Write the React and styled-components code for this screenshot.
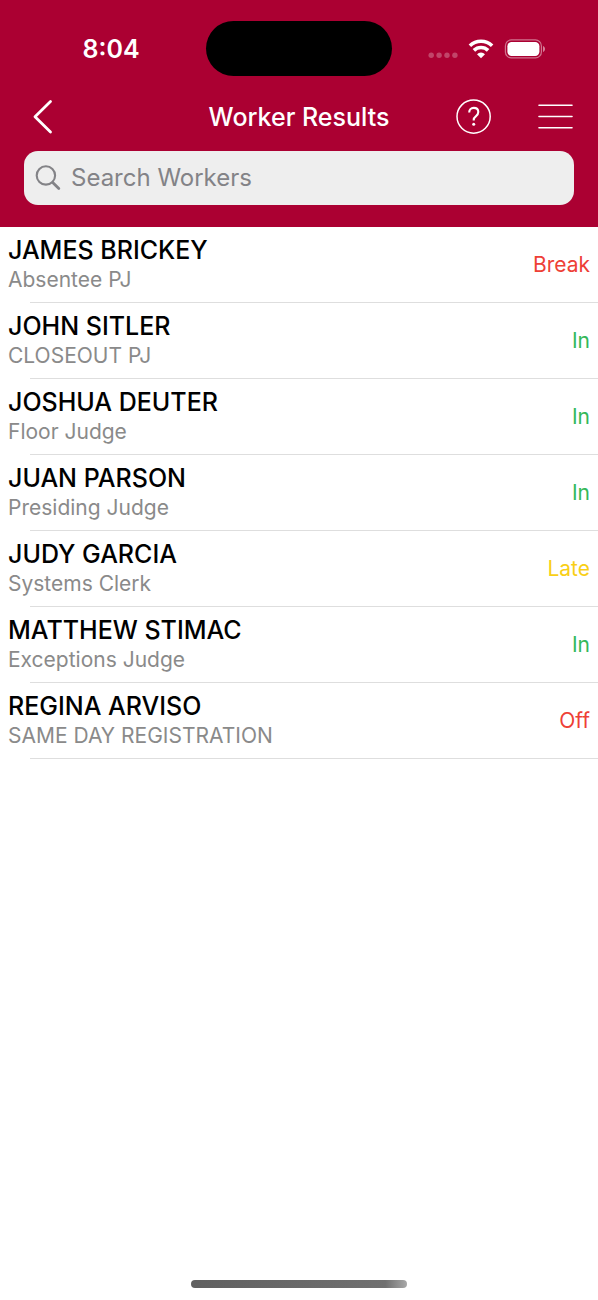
import React from "react";
import styled, { createGlobalStyle } from "styled-components";

const GlobalStyle = createGlobalStyle`
  *, *::before, *::after { box-sizing: border-box; }
  body {
    margin: 0;
    background: #fff;
    font-family: Inter, "Liberation Sans", sans-serif;
    -webkit-font-smoothing: antialiased;
  }
`;

const Screen = styled.div`
  min-height: 100vh;
  display: flex;
  flex-direction: column;
`;

const Header = styled.header`
  background: #ab0032;
  color: #fff;
  padding-bottom: 22px;
`;

const StatusBar = styled.div`
  display: grid;
  grid-template-columns: 1fr 186px 1fr;
  align-items: center;
  padding-top: 21px;
`;

const Time = styled.time`
  padding-left: 16px;
  text-align: center;
  font-size: 25px;
  line-height: 32px;
  font-weight: 600;
`;

const Island = styled.div`
  height: 55px;
  border-radius: 28px;
  background: #000;
`;

const Indicators = styled.div`
  display: flex;
  align-items: center;
  justify-content: center;
  gap: 10px;
  padding-right: 16px;
`;

const NavBar = styled.nav`
  display: grid;
  grid-template-columns: 1fr auto 1fr;
  align-items: center;
  height: 42px;
  margin-top: 20px;
  padding: 0 24px;
`;

const Title = styled.h1`
  margin: 0;
  font-size: 25px;
  line-height: 32px;
  font-weight: 500;
`;

const Actions = styled.div`
  display: flex;
  justify-content: flex-end;
  gap: 44px;
`;

const IconButton = styled.button`
  display: flex;
  align-items: center;
  width: 38px;
  height: 38px;
  padding: 0;
  border: 0;
  background: none;
  color: inherit;
  cursor: pointer;
`;

const SearchField = styled.label`
  display: flex;
  align-items: center;
  gap: 10px;
  height: 54px;
  margin: 13px 24px 0;
  padding: 0 11px;
  border-radius: 14px;
  background: #eeeeee;
  color: #838387;
`;

const SearchInput = styled.input`
  flex: 1;
  min-width: 0;
  padding: 0;
  border: 0;
  outline: 0;
  background: none;
  color: #222;
  font-family: inherit;
  font-size: 24px;
  line-height: 32px;
  &::placeholder { color: #838387; opacity: 1; }
`;

const WorkerList = styled.ul`
  flex: 1;
  margin: 0;
  padding: 0;
  list-style: none;
`;

const WorkerRow = styled.li`
  display: flex;
  align-items: center;
  justify-content: space-between;
  height: 76px;
  padding: 0 8px;
  background: linear-gradient(#dedede, #dedede) 30px 100% / 100% 1px no-repeat;
`;

const WorkerName = styled.h2`
  margin: 0;
  font-size: 25px;
  line-height: 30px;
  font-weight: 500;
  color: #000;
`;

const WorkerRole = styled.p`
  margin: 0;
  font-size: 21px;
  line-height: 30px;
  color: #8a8a8a;
`;

const statusColors = {
  Break: "#ee4036",
  Off: "#ee4036",
  In: "#34b85a",
  Late: "#f9cf16",
};

const WorkerStatus = styled.span`
  font-size: 21px;
  line-height: 30px;
  color: ${({ $status }) => statusColors[$status]};
`;

const HomeArea = styled.footer`
  display: flex;
  justify-content: center;
  padding: 12px 0;
`;

const HomeIndicator = styled.div`
  width: 36%;
  height: 8px;
  border-radius: 4px;
  background: linear-gradient(90deg, #606060, #707070 90%, #a8a8a8);
`;

const workers = [
  { name: "JAMES BRICKEY", role: "Absentee PJ", status: "Break" },
  { name: "JOHN SITLER", role: "CLOSEOUT PJ", status: "In" },
  { name: "JOSHUA DEUTER", role: "Floor Judge", status: "In" },
  { name: "JUAN PARSON", role: "Presiding Judge", status: "In" },
  { name: "JUDY GARCIA", role: "Systems Clerk", status: "Late" },
  { name: "MATTHEW STIMAC", role: "Exceptions Judge", status: "In" },
  { name: "REGINA ARVISO", role: "SAME DAY REGISTRATION", status: "Off" },
];

const SignalIcon = () => (
  <svg width="30" height="20" viewBox="0 0 30 20" fill="#fff" fillOpacity="0.27" aria-hidden="true">
    <circle cx="3.200" cy="16.200" r="2.700" />
    <circle cx="11.100" cy="16.200" r="2.700" />
    <circle cx="19" cy="16.200" r="2.700" />
    <circle cx="26.900" cy="16.200" r="2.700" />
  </svg>
);

const WifiIcon = () => (
  <svg width="26" height="20" viewBox="0 0 26 20" fill="none" stroke="#fff" strokeWidth="3.600" aria-hidden="true">
    <path d="M1.900 6.700a16 16 0 0 1 22.200 0" />
    <path d="M5.900 11.400a10.200 10.200 0 0 1 14.200 0" />
    <path d="M13 19.200l-4-4a5.700 5.700 0 0 1 8 0z" fill="#fff" stroke="none" />
  </svg>
);

const BatteryIcon = () => (
  <svg width="42" height="20" viewBox="0 0 42 20" fill="none" aria-hidden="true">
    <rect x="1.400" y="0.900" width="36" height="18" rx="6" stroke="#fff" strokeOpacity="0.45" strokeWidth="1.200" />
    <rect x="3.400" y="3" width="32" height="14" rx="4.200" fill="#fff" />
    <path d="M39 7v6c1.300-.5 2-1.700 2-3s-.7-2.500-2-3z" fill="#fff" fillOpacity="0.5" />
  </svg>
);

const BackIcon = () => (
  <svg width="38" height="38" viewBox="0 0 38 38" fill="none" stroke="currentColor" strokeWidth="2.800" strokeLinecap="round" strokeLinejoin="round" aria-hidden="true">
    <path d="M26.500 3.500L11 18.700L26.500 34" />
  </svg>
);

const HelpIcon = () => (
  <svg width="38" height="38" viewBox="0 0 38 38" fill="none" stroke="currentColor" aria-hidden="true">
    <circle cx="19.600" cy="18.600" r="16.600" strokeWidth="1.500" />
    <path d="M15.200 14.400c0-2.700 1.700-4.500 4.500-4.500s4.600 1.700 4.600 4.200c0 1.900-.9 3-2.500 4.200c-1.500 1.100-2.100 2-2.100 3.700v.6" strokeWidth="2.100" />
    <circle cx="19.700" cy="26.300" r="1.500" fill="currentColor" stroke="none" />
  </svg>
);

const MenuIcon = () => (
  <svg width="38" height="38" viewBox="0 0 38 38" fill="none" stroke="currentColor" strokeWidth="1.600" strokeLinecap="round" aria-hidden="true">
    <path d="M3 7.300h33M3 18.500h33M3 29.700h33" />
  </svg>
);

const SearchIcon = () => (
  <svg width="26" height="26" viewBox="0 0 26 26" fill="none" stroke="currentColor" strokeLinecap="round" aria-hidden="true">
    <circle cx="10.900" cy="10.400" r="9.200" strokeWidth="2.100" />
    <path d="M17.700 17.400L23.800 23.500" strokeWidth="2.800" />
  </svg>
);

export default function App() {
  return (
    <>
      <GlobalStyle />
      <Screen>
        <Header>
          <StatusBar>
            <Time>8:04</Time>
            <Island />
            <Indicators>
              <SignalIcon />
              <WifiIcon />
              <BatteryIcon />
            </Indicators>
          </StatusBar>
          <NavBar>
            <IconButton type="button" aria-label="Back">
              <BackIcon />
            </IconButton>
            <Title>Worker Results</Title>
            <Actions>
              <IconButton type="button" aria-label="Help">
                <HelpIcon />
              </IconButton>
              <IconButton type="button" aria-label="Menu">
                <MenuIcon />
              </IconButton>
            </Actions>
          </NavBar>
          <SearchField>
            <SearchIcon />
            <SearchInput type="search" placeholder="Search Workers" aria-label="Search Workers" />
          </SearchField>
        </Header>
        <WorkerList>
          {workers.map(({ name, role, status }) => (
            <WorkerRow key={name}>
              <div>
                <WorkerName>{name}</WorkerName>
                <WorkerRole>{role}</WorkerRole>
              </div>
              <WorkerStatus $status={status}>{status}</WorkerStatus>
            </WorkerRow>
          ))}
        </WorkerList>
        <HomeArea>
          <HomeIndicator />
        </HomeArea>
      </Screen>
    </>
  );
}
